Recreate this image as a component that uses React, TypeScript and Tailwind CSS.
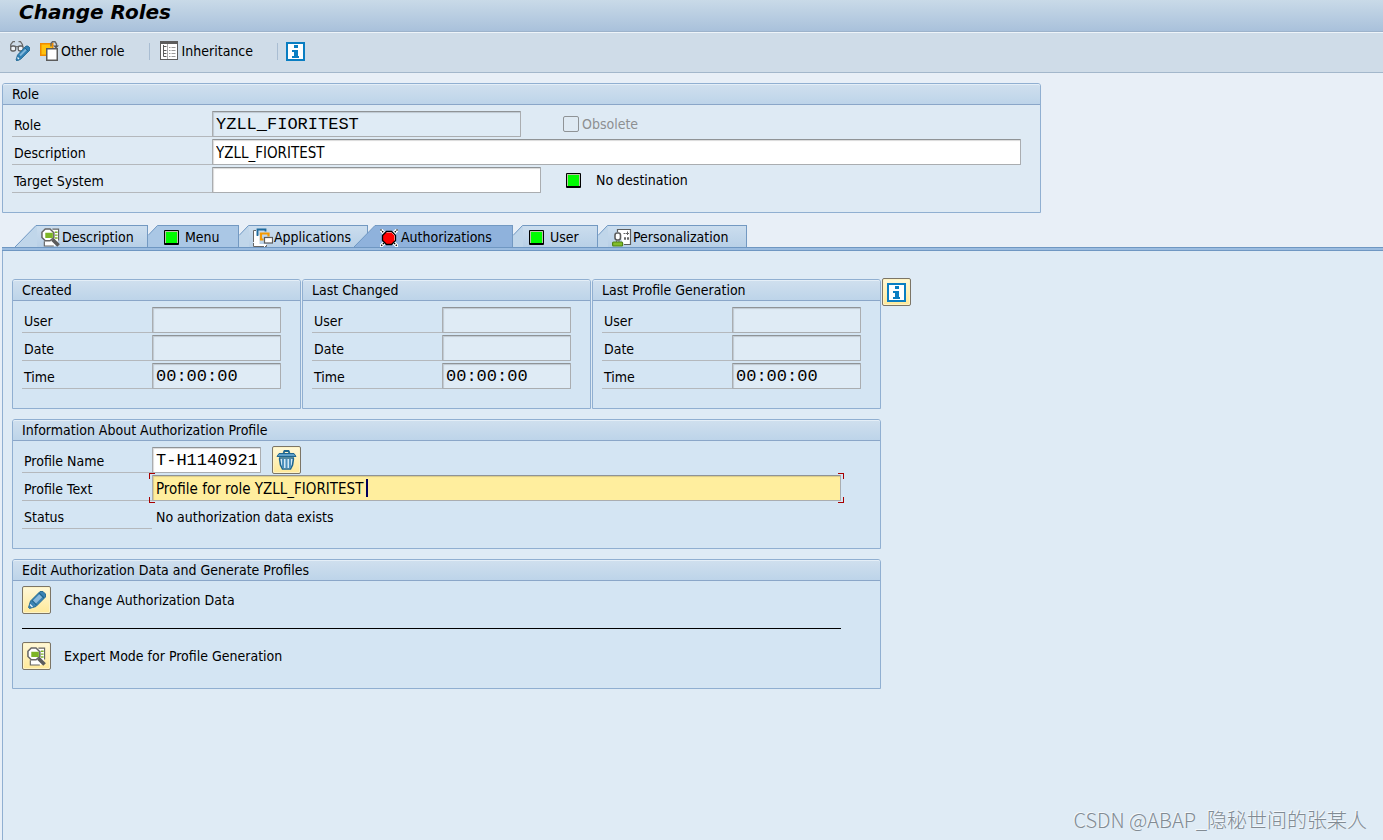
import type { ReactNode } from 'react';
import clsx from 'clsx';

/* ---------- Icons ---------- */

function DisplayChangeIcon() {
  return (
    <svg width="20" height="20" viewBox="0 0 20 20" fill="none" aria-hidden="true">
      <path d="M0.700 6V3.500L3 0.700H5M8.500 0.700h2l2 3V6" stroke="#6a6a6a" strokeWidth="1.200" />
      <rect x="0.700" y="5" width="5" height="5" rx="1.800" fill="#eef3f7" stroke="#5f5f5f" strokeWidth="1.300" />
      <rect x="8.200" y="5" width="5" height="5" rx="1.800" fill="#eef3f7" stroke="#5f5f5f" strokeWidth="1.300" />
      <path d="M5.500 6q1.500-1 3 0" stroke="#5f5f5f" strokeWidth="1.200" />
      <path d="M16 5h2l2 2v2l-9 9-4 2-1-1 1.500-5z" fill="#2f7fb3" stroke="#1f668f" strokeWidth="0.800" />
      <path d="M10 14.500l6-6" stroke="#7fb5da" strokeWidth="2" />
      <path d="M14.500 6.500l4 4" stroke="#1f668f" strokeWidth="1" />
      <path d="M7.500 16.500l1.500 1.500" stroke="#e8f3fa" strokeWidth="1.200" />
    </svg>
  );
}

function OtherRoleIcon() {
  return (
    <svg width="20" height="20" viewBox="0 0 20 20" fill="none" aria-hidden="true">
      <rect x="0.750" y="2.750" width="12" height="11.500" fill="#ffc20e" stroke="#f08a00" strokeWidth="1.500" />
      <path d="M11 5.500V2.500L12.500 0.700h2.500L16.500 3v2" stroke="#666" strokeWidth="1.400" />
      <path d="M13 4.500h6L16 7.500z" fill="#555" />
      <rect x="6.750" y="7.750" width="10.500" height="11.500" fill="#fff" stroke="#5c5c5c" strokeWidth="1.500" />
    </svg>
  );
}

function InheritanceIcon() {
  return (
    <svg width="18" height="20" viewBox="0 0 18 20" fill="none" aria-hidden="true">
      <rect x="0.500" y="0.500" width="17" height="18" fill="#fff" stroke="#5c5c5c" />
      <path d="M0 1.500h18" stroke="#5c5c5c" strokeWidth="3" />
      <path d="M7.500 3v15" stroke="#aaa" />
      <path d="M3.500 4v11.500M3.500 5.500h3M3.500 9.500h3M3.500 12.500h3M3.500 15.500h3" stroke="#5c5c5c" />
      <path d="M9 6.500h1.500M11.500 6.500h4M9 9.500h1.500M11.500 9.500h4M9 12.500h1.500M11.500 12.500h4M9 15.500h1.500M11.500 15.500h4" stroke="#9a9a9a" />
    </svg>
  );
}

function InfoIcon() {
  return (
    <svg width="19" height="19" viewBox="0 0 19 19" aria-hidden="true">
      <path d="M0 0h19v19H0z" fill="#0a7ec2" />
      <path d="M2 2h15v15H2z" fill="#fff" />
      <path d="M8 3h4v3H8zM6 8h6v6h1v2H6v-2h2v-4H6z" fill="#0a7ec2" />
    </svg>
  );
}

function GreenLight() {
  return (
    <svg width="15" height="15" viewBox="0 0 15 15" aria-hidden="true">
      <rect width="15" height="15" rx="1" fill="#000" />
      <path d="M1 1h13v12H1z" fill="#b9c3a5" />
      <path d="M2 2h11v11H2z" fill="#00fb00" />
    </svg>
  );
}

function RedLight() {
  return (
    <svg width="18" height="18" viewBox="0 0 18 18" aria-hidden="true">
      <path d="M0 0l18 18M18 0L0 18" stroke="#fff" strokeWidth="3.500" />
      <path d="M0.500 0.500l17 17M17.500 0.500l-17 17" stroke="#000" strokeWidth="1.300" strokeDasharray="1.400 1" />
      <path d="M6.500 2.500h5l4 4v5l-4 4h-5l-4-4v-5z" fill="#f00" stroke="#000" strokeWidth="1.300" />
      <path d="M6.500 3.500h5l3 3v5" fill="none" stroke="#f8a5a5" strokeWidth="0.800" />
    </svg>
  );
}

function MagnifierIcon() {
  return (
    <svg width="19" height="19" viewBox="0 0 20 20" fill="none" aria-hidden="true">
      <path d="M10 1.500h8v12l-3 5.500H4v-7z" fill="#fff" />
      <path d="M12 1.200h6.500v12M3.500 14v5h10" stroke="#666" strokeWidth="1.200" />
      <path d="M14.500 4.500h3M14.500 7.500h3M14.500 10.500h3" stroke="#7db526" strokeWidth="1.400" />
      <path d="M4.500 1h5l4 4v5l-4 3.500h-5L1 10V4.500z" fill="#fff" stroke="#666" strokeWidth="1.600" />
      <path d="M4.500 5h8v5.500h-8z" fill="#7db526" />
      <path d="M12 12l6.500 6.500" stroke="#5c5c5c" strokeWidth="3.800" />
    </svg>
  );
}

function ApplicationsIcon() {
  return (
    <svg width="20" height="20" viewBox="0 0 20 20" fill="none" aria-hidden="true">
      <path d="M0.500 2h3v5h3v9h7v3h-13z" fill="#fff" />
      <path d="M3 2.500H0.500v16h13V17" stroke="#666" strokeDasharray="14 1" />
      <path d="M4.500 8V1.500h8v2" stroke="#1f6a9c" strokeWidth="1.800" />
      <path d="M10.500 11.500H8V5.500h7.500v3" stroke="#f59a00" strokeWidth="2.200" />
      <rect x="11.500" y="9.500" width="8" height="5.500" fill="#fff" stroke="#5c5c5c" strokeWidth="1.200" />
    </svg>
  );
}

function PersonalizationIcon() {
  return (
    <svg width="20" height="20" viewBox="0 0 20 20" fill="none" aria-hidden="true">
      <path d="M5.500 2h13v14.500h-7z" fill="#fff" />
      <path d="M5.500 4V1.500h13v15H12" stroke="#5c5c5c" strokeWidth="1.200" />
      <path d="M11.500 5.500h2M15.500 3.500v3.500M14 5.500h3M12.500 9.500h1v2h-1zM15.500 9.500h1v2h-1z" stroke="#666" />
      <rect x="3" y="5" width="5.500" height="7" rx="2.200" fill="#fff" stroke="#5c5c5c" strokeWidth="1.600" />
      <path d="M4.500 12v2M7 12v2" stroke="#777" />
      <rect x="0.600" y="14" width="10" height="4" rx="1" fill="#82bd2a" stroke="#4f8415" strokeWidth="1.200" />
    </svg>
  );
}

function TrashIcon() {
  return (
    <svg width="21" height="20" viewBox="0 0 21 20" fill="none" aria-hidden="true">
      <path d="M7.500 3L8.500 1h4l1 2" stroke="#1f668f" strokeWidth="1.800" />
      <path d="M3 3.500h15L20 6.500H1z" fill="#5f9fc9" stroke="#1f668f" />
      <path d="M3 8h15M3.500 8.500L4.500 15l2 4h8l2-4 1-6.500" fill="#d4e8f4" stroke="#1f668f" strokeWidth="1.600" />
      <path d="M7 9v9M10.500 9v9M14 9v9" stroke="#4d90bd" strokeWidth="2" />
    </svg>
  );
}

function PencilIcon() {
  return (
    <svg width="20" height="20" viewBox="0 0 20 20" fill="none" aria-hidden="true">
      <path d="M13 1.500h3L18.500 4v3L9 16.500 2.500 18.500 1.500 17.500 3.500 11z" fill="#3a82b4" stroke="#1f668f" strokeWidth="0.900" />
      <path d="M6.500 13L14 5.500" stroke="#8ab9dc" strokeWidth="4" />
      <path d="M5 10.500l4.500 4.500M12 3l5 5" stroke="#1f668f" strokeWidth="1.200" />
      <path d="M3 14.500l2.500 2.500" stroke="#e8f3fa" strokeWidth="1.300" />
    </svg>
  );
}

/* ---------- Building blocks ---------- */

type GroupProps = { title: string; className?: string; light?: boolean; children: ReactNode };

function Group({ title, className, light, children }: GroupProps) {
  return (
    <section
      className={clsx('rounded-t-[3px] border border-[#90afd1]', light ? 'bg-[#deeaf4]' : 'bg-[#d4e5f3]', className)}
    >
      <h2 className="h-[21px] rounded-t-[2px] border-t border-b border-t-[#e4eef7] border-b-[#8aa6c8] bg-linear-to-b from-[#cfdfee] to-[#bdd4e9] px-[9px] leading-[18px]">
        {title}
      </h2>
      {children}
    </section>
  );
}

function Rows({ children }: { children: ReactNode }) {
  return <div className="flex flex-col gap-[2px] pt-[6px] pr-[19px] pb-[19px] pl-[9px]">{children}</div>;
}

type RowProps = { id?: string; label: string; wide?: boolean; children: ReactNode };

function Row({ id, label, wide, children }: RowProps) {
  const labelClass = clsx('shrink-0 border-b border-[#b4b8bc] pl-[2px] leading-[28px]', wide ? 'w-[200px]' : 'w-[130px]');
  return (
    <div className="flex h-[26px]">
      {id ? (
        <label htmlFor={id} className={labelClass}>{label}</label>
      ) : (
        <span className={labelClass}>{label}</span>
      )}
      {children}
    </div>
  );
}

type FieldProps = { id: string; value?: string; mono?: boolean; tone?: 'white' | 'locked' | 'active'; className: string };

function Field({ id, value = '', mono, tone = 'white', className }: FieldProps) {
  return (
    <input
      id={id}
      type="text"
      defaultValue={value}
      readOnly={tone === 'locked'}
      className={clsx(
        'h-[26px] min-w-0 rounded-[1px] border border-[#aaadb0] border-t-[#8f9396] px-[3px] outline-none',
        'shadow-[inset_1px_1px_1px_rgba(0,0,0,0.15)]',
        mono ? "font-['Liberation_Mono',monospace] text-[17px]" : 'pt-[2px] text-[15px]',
        tone === 'white' && 'bg-white',
        tone === 'locked' && 'bg-[#dfebf5]',
        tone === 'active' && 'bg-[#ffee9e]',
        className,
      )}
    />
  );
}

function IconButton({ label, children }: { label: string; children: ReactNode }) {
  return (
    <button
      type="button"
      aria-label={label}
      className="flex h-[28px] w-[29px] shrink-0 items-center justify-center rounded-[2px] border border-[#7c7566] bg-linear-to-b from-[#fff8d8] to-[#ffe998] shadow-[inset_0_0_0_1px_#fdf3c4]"
    >
      {children}
    </button>
  );
}

type TabProps = { label: string; icon: ReactNode; kind?: 'first' | 'selected' | 'plain'; dark?: boolean; className: string };

function Tab({ label, icon, kind = 'plain', dark, className }: TabProps) {
  const selected = kind === 'selected';
  const fill = selected ? '#8fb2dc' : dark ? '#aac7e5' : '#c0d6ea';
  return (
    <button type="button" role="tab" aria-selected={selected} className={clsx('flex h-[22px] shrink-0', className)}>
      {kind === 'plain' ? (
        <svg width="10" height="22" viewBox="0 0 10 22" className="shrink-0" aria-hidden="true">
          <path d="M0 22V10.500L9.500 0.500H10V22z" fill={fill} />
          <path d="M0 10.500L9.500 0.500H10" fill="none" stroke="#6f97c2" />
        </svg>
      ) : (
        <svg width="22" height="22" viewBox="0 0 22 22" className="shrink-0" aria-hidden="true">
          <path d="M0 22L21 0.500H22V22z" fill={fill} />
          <path d="M0 22L21 0.500H22" fill="none" stroke="#6f97c2" />
        </svg>
      )}
      <span
        className={clsx(
          'flex h-full flex-1 items-center border-t border-r border-[#7399c2] pt-[2px] whitespace-nowrap',
          selected ? 'bg-[#8fb2dc]' : dark ? 'bg-[#aac7e5]' : 'bg-linear-to-b from-[#cbddee] to-[#b8d0e7]',
        )}
      >
        <span className="flex w-[21px] shrink-0 items-center">{icon}</span>
        {label}
      </span>
    </button>
  );
}

const stamps = [
  { id: 'created', title: 'Created' },
  { id: 'changed', title: 'Last Changed' },
  { id: 'generated', title: 'Last Profile Generation' },
];

export default function App() {
  return (
    <div className="relative flex min-h-screen flex-col overflow-hidden bg-[#e8eff7] font-['DejaVu_Sans_Condensed','Noto_Sans',sans-serif] text-[14px] text-black">
      {/* Title */}
      <header className="h-8 border-b border-[#9db3cb] bg-linear-to-b from-[#c9dae8] to-[#a9c1db] pl-[19px]">
        <h1 className="font-['DejaVu_Sans',sans-serif] text-[20px] leading-[24px] font-bold italic">Change Roles</h1>
      </header>

      {/* Toolbar */}
      <div role="toolbar" className="flex h-[41px] items-center border-t border-b border-t-[#eef4f9] border-b-[#a3b7cb] bg-[#cfdce8] pb-[3px] pl-[10px]">
        <button type="button" aria-label="Display / Change" className="mr-[10px]"><DisplayChangeIcon /></button>
        <button type="button" className="flex items-center gap-[1px]"><OtherRoleIcon />Other role</button>
        <span className="mr-[10px] ml-[24px] h-[17px] w-px bg-[#a9bdd2]" />
        <button type="button" className="flex items-center gap-[4px]"><InheritanceIcon />Inheritance</button>
        <span className="mr-[8px] ml-[24px] h-[17px] w-px bg-[#a9bdd2]" />
        <button type="button" aria-label="Information"><InfoIcon /></button>
      </div>

      {/* Role data */}
      <div className="pt-[10px] pl-[2px]">
        <Group title="Role" light className="w-full max-w-[1039px]">
          <Rows>
            <Row id="role" label="Role" wide>
              <Field id="role" value="YZLL_FIORITEST" mono tone="locked" className="w-[309px]" />
              <label className="ml-[42px] flex items-center gap-[3px] text-[#8d8f91]">
                <input type="checkbox" disabled className="size-4 appearance-none rounded-[2px] border border-[#8f9396] bg-[#dfeaf3]" />
                Obsolete
              </label>
            </Row>
            <Row id="description" label="Description" wide>
              <Field id="description" value="YZLL_FIORITEST" className="flex-1" />
            </Row>
            <Row id="target" label="Target System" wide>
              <Field id="target" className="w-[329px]" />
              <span className="ml-[25px] flex items-center gap-[15px]"><GreenLight />No destination</span>
            </Row>
          </Rows>
        </Group>
      </div>

      {/* Tabs */}
      <div role="tablist" className="flex pt-3 pl-[15px]">
        <Tab label="Description" icon={<MagnifierIcon />} kind="first" className="w-[133px] [&>span]:pl-[4px]" />
        <Tab label="Menu" icon={<GreenLight />} dark className="w-[91px] [&>span]:pl-[6px]" />
        <Tab label="Applications" icon={<ApplicationsIcon />} className="w-[129px] [&>span]:pl-[4px]" />
        <Tab label="Authorizations" icon={<RedLight />} kind="selected" className="-ml-[14px] w-[159px] [&>span]:pl-[4px]" />
        <Tab label="User" icon={<GreenLight />} className="w-[85px] [&>span]:pl-[6px]" />
        <Tab label="Personalization" icon={<PersonalizationIcon />} className="w-[149px] [&>span]:pl-[4px]" />
      </div>
      <div className="ml-[2px] h-1 border-t border-b border-[#6f97c2] bg-[#9bbce0]" />

      {/* Authorizations */}
      <main role="tabpanel" className="ml-[2px] flex-1 border-l border-[#90afd1] bg-[#dfebf5] pt-[27px] pl-[9px]">
        <div className="flex items-start gap-px">
          {stamps.map((s) => (
            <Group key={s.id} title={s.title} className="mt-px w-[289px]">
              <Rows>
                <Row id={`${s.id}-user`} label="User">
                  <Field id={`${s.id}-user`} tone="locked" className="flex-1" />
                </Row>
                <Row id={`${s.id}-date`} label="Date">
                  <Field id={`${s.id}-date`} tone="locked" className="flex-1" />
                </Row>
                <Row id={`${s.id}-time`} label="Time">
                  <Field id={`${s.id}-time`} value="00:00:00" mono tone="locked" className="flex-1" />
                </Row>
              </Rows>
            </Group>
          ))}
          <IconButton label="Information"><InfoIcon /></IconButton>
        </div>

        <Group title="Information About Authorization Profile" className="mt-[10px] w-full max-w-[869px]">
          <Rows>
            <Row id="profile-name" label="Profile Name">
              <Field id="profile-name" value="T-H1140921" mono className="w-[109px]" />
              <span className="ml-[11px] flex items-center"><IconButton label="Delete profile"><TrashIcon /></IconButton></span>
            </Row>
            <Row id="profile-text" label="Profile Text">
              <div className="relative mr-5 flex flex-1">
                <Field id="profile-text" value="Profile for role YZLL_FIORITEST" tone="active" className="flex-1" />
                <span className="absolute top-[4px] left-[214px] h-[18px] w-[2px] bg-[#00005c]" />
                {/* focus corners */}
                <span className="absolute -top-[2px] -left-[3px] size-[6px] border-t border-l border-[#a80000]" />
                <span className="absolute -bottom-[2px] -left-[3px] size-[6px] border-b border-l border-[#a80000]" />
                <span className="absolute -top-[2px] -right-[3px] size-[6px] border-t border-r border-[#a80000]" />
                <span className="absolute -right-[3px] -bottom-[2px] size-[6px] border-r border-b border-[#a80000]" />
              </div>
            </Row>
            <Row label="Status">
              <span className="pl-[4px] leading-[28px]">No authorization data exists</span>
            </Row>
          </Rows>
        </Group>

        <Group title="Edit Authorization Data and Generate Profiles" className="mt-[10px] w-full max-w-[869px]">
          <div className="pt-[5px] pr-[39px] pb-[18px] pl-[9px]">
            <div className="flex items-center gap-[13px]">
              <IconButton label="Change Authorization Data"><PencilIcon /></IconButton>
              <span className="leading-[30px] -my-px">Change Authorization Data</span>
            </div>
            <hr className="mt-[14px] mb-[13px] border-black" />
            <div className="flex items-center gap-[13px]">
              <IconButton label="Expert Mode for Profile Generation"><MagnifierIcon /></IconButton>
              <span className="leading-[30px] -my-px">Expert Mode for Profile Generation</span>
            </div>
          </div>
        </Group>
      </main>

      <p className="absolute right-4 bottom-[5px] font-['Noto_Sans_CJK_SC',sans-serif] text-[20px] leading-[30px] font-light text-[#828b93] [text-shadow:-1px_-1px_0_#f4f8fb]">
        CSDN @ABAP_隐秘世间的张某人
      </p>
    </div>
  );
}
